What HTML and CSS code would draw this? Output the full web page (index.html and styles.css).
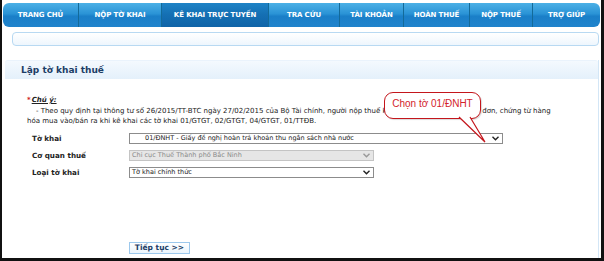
FILE: index.html
```html
<!DOCTYPE html>
<html>
<head>
<meta charset="utf-8">
<link rel="stylesheet" href="styles.css">
</head>
<body>
<div class="frame">
  <nav class="nav">
    <a class="tab w1">TRANG CHỦ</a>
    <a class="tab w2">NỘP TỜ KHAI</a>
    <a class="tab w3 active">KÊ KHAI TRỰC TUYẾN</a>
    <a class="tab w4">TRA CỨU</a>
    <a class="tab w5">TÀI KHOẢN</a>
    <a class="tab w6">HOÀN THUẾ</a>
    <a class="tab w7">NỘP THUẾ</a>
    <a class="tab w8 last">TRỢ GIÚP</a>
  </nav>
  <div class="subbar"></div>
  <section class="panel">
    <div class="panel-head">Lập tờ khai thuế</div>
    <div class="panel-body">
      <div class="note-title"><span class="star">*</span><span class="note-label">Chú ý:</span></div>
      <p class="note">&nbsp;&nbsp;&nbsp;&nbsp;- Theo quy định tại thông tư số 26/2015/TT-BTC ngày 27/02/2015 của Bộ Tài chính, người nộp thuế không phải gửi bảng kê hóa đơn, chứng từ hàng<br>hóa mua vào/bán ra khi kê khai các tờ khai 01/GTGT, 02/GTGT, 04/GTGT, 01/TTĐB.</p>
      <div class="form">
        <div class="row">
          <span class="label">Tờ khai</span>
          <div class="sel wide"><span class="val indent">01/ĐNHT - Giấy đề nghị hoàn trả khoản thu ngân sách nhà nước</span><span class="arrow"><svg width="7" height="5" viewBox="0 0 7 5"><path d="M0.5 0.8 L3.5 3.8 L6.5 0.8" fill="none" stroke="#222" stroke-width="1.4"/></svg></span></div>
        </div>
        <div class="row">
          <span class="label">Cơ quan thuế</span>
          <div class="sel narrow disabled"><span class="val">Chi cục Thuế Thành phố Bắc Ninh</span><span class="arrow"><svg width="7" height="5" viewBox="0 0 7 5"><path d="M0.5 0.8 L3.5 3.8 L6.5 0.8" fill="none" stroke="#999" stroke-width="1.4"/></svg></span></div>
        </div>
        <div class="row">
          <span class="label">Loại tờ khai</span>
          <div class="sel narrow"><span class="val">Tờ khai chính thức</span><span class="arrow"><svg width="7" height="5" viewBox="0 0 7 5"><path d="M0.5 0.8 L3.5 3.8 L6.5 0.8" fill="none" stroke="#222" stroke-width="1.4"/></svg></span></div>
        </div>
      </div>
      <div class="actions"><button class="btn">Tiếp tục &gt;&gt;</button></div>
    </div>
    <div class="callout">
      <span class="callout-text">Chọn tờ 01/ĐNHT</span>
      <svg class="tail" width="40" height="32" viewBox="0 0 40 32">
        <path d="M2 0 L28 25 L13 0" fill="#fff" stroke="#c4161c" stroke-width="1.2" stroke-linejoin="miter"/>
      </svg>
    </div>
  </section>
</div>
</body>
</html>
```
FILE: styles.css
```css
* { box-sizing: border-box; }
html, body { margin: 0; padding: 0; }
body {
  width: 604px;
  height: 261px;
  overflow: hidden;
  background: #fff;
  font-family: Tahoma, "DejaVu Sans", sans-serif;
}
.frame {
  width: 604px;
  height: 261px;
  border-left: 2px solid #111;
  border-right: 3px solid #111;
  border-bottom: 3px solid #111;
  padding: 3px 1px 0 1px;
  display: flex;
  flex-direction: column;
  position: relative;
}
.nav {
  display: flex;
  height: 24px;
  border-radius: 6px;
  overflow: hidden;
  background: linear-gradient(#4bb0e6 0%, #2a93d6 45%, #1a7fc8 55%, #2083cc 100%);
}
.tab {
  display: flex;
  align-items: center;
  justify-content: center;
  color: #fff;
  font-family: Tahoma, "DejaVu Sans", sans-serif;
  font-weight: bold;
  font-size: 7px;
  letter-spacing: -0.1px;
  border-right: 1px solid #136a99;
  white-space: nowrap;
}
.tab.last { border-right: none; }
.tab.active { background: linear-gradient(#1e83c6 0%, #146fb3 50%, #0f64a8 100%); }
.w1 { width: 76px; }
.w2 { width: 83px; }
.w3 { width: 107px; }
.w4 { width: 71px; }
.w5 { width: 64px; }
.w6 { width: 66px; }
.w7 { width: 63px; }
.w8 { flex: 1; }
.subbar {
  margin: 5px 1px 0 9px;
  height: 14px;
  border: 1px solid #b8d9f2;
  border-radius: 4px;
  background: linear-gradient(#ffffff, #eef6fd);
}
.panel {
  margin: 14px 1px 0 2px;
  flex: 1;
  border-right: 1px solid #d3e6f6;
  display: flex;
  flex-direction: column;
  position: relative;
}
.panel-head {
  height: 19px;
  padding-left: 16px;
  display: flex;
  align-items: center;
  font-family: Tahoma, "DejaVu Sans", sans-serif;
  font-weight: bold;
  font-size: 9px;
  color: #1c3d66;
  background: linear-gradient(#f4f9fe, #e4f0fb);
  border-top: 1px solid #eaf3fc;
  border-radius: 3px 3px 0 0;
}
.panel-body {
  flex: 1;
  padding: 17px 0 0 22px;
  display: flex;
  flex-direction: column;
  font-family: Tahoma, "DejaVu Sans", sans-serif;
  font-size: 7px;
  color: #222;
}
.note-title { height: 9px; line-height: 9px; }
.star { color: #d02020; font-weight: bold; margin-right: 1px; }
.note-label { font-style: italic; font-weight: bold; text-decoration: underline; }
.note {
  margin: 1px 0 0 0;
  line-height: 10px;
  white-space: nowrap;
}
.form {
  margin-top: 7px;
  padding-left: 5px;
  display: flex;
  flex-direction: column;
  gap: 7px;
}
.row { display: flex; align-items: center; height: 10px; }
.label { width: 97px; font-weight: bold; font-size: 7.2px; color: #222; }
.sel {
  height: 11px;
  border: 1px solid #8c8c8c;
  background: #fff;
  display: flex;
  align-items: center;
  justify-content: space-between;
  padding: 0 3px 0 2px;
  font-size: 6.5px;
}
.sel.wide { width: 374px; }
.sel.narrow { width: 245px; }
.sel.disabled { background: #e6e6e6; border-color: #c4c4c4; color: #8a8a8a; }
.val { white-space: nowrap; }
.val.indent { padding-left: 13px; }
.arrow { display: flex; align-items: center; }
.actions { margin-top: auto; padding: 0 0 4px 102px; }
.btn {
  font-family: Tahoma, "DejaVu Sans", sans-serif;
  font-weight: bold;
  font-size: 7.5px;
  color: #1c3d66;
  background: linear-gradient(#ffffff, #eaf4fc);
  border: 1px solid #9cc8ec;
  height: 12px;
  width: 61px;
  padding: 0;
  line-height: 10px;
}
.callout {
  position: absolute;
  left: 379px;
  top: 32px;
  width: 97px;
  height: 27px;
  border: 1.2px solid #c4161c;
  border-radius: 9px;
  background: #fff;
  display: flex;
  align-items: center;
  justify-content: center;
  box-shadow: 1px 1px 1px rgba(0,0,0,0.15);
}
.callout-text {
  font-family: "Liberation Sans", Arial, sans-serif;
  font-size: 10px;
  color: #d3222a;
  margin-top: -4px;
}
.tail {
  position: absolute;
  left: 72px;
  top: 24px;
  overflow: visible;
}
```
